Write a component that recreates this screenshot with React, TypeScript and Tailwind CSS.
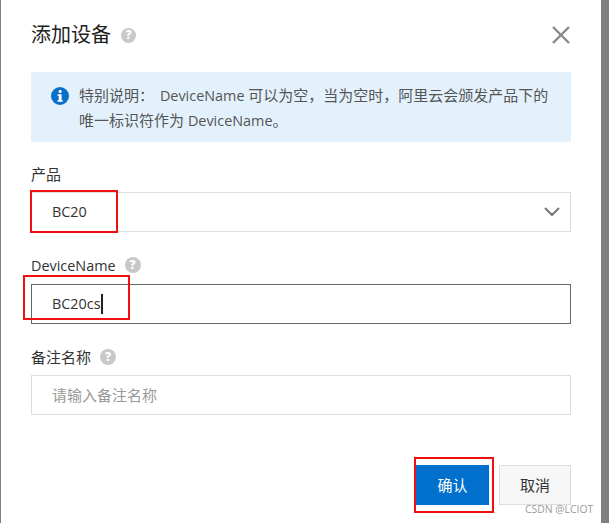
import { ReactNode } from "react";

const font = "font-['Open_Sans','Noto_Sans_CJK_SC',sans-serif]";

function Help({ className = "h-[16px] w-[16px]" }: { className?: string }) {
  return (
    <span className={`flex items-center justify-center rounded-full bg-[#c8c8c8] text-[12px] font-extrabold leading-none text-white ${className}`}>
      ?
    </span>
  );
}

function Field({ label, help, children }: { label: ReactNode; help?: boolean; children: ReactNode }) {
  return (
    <div className="flex flex-col">
      <div className="flex h-[20px] items-center gap-[9px] text-[15px] text-[#333333]">
        <span>{label}</span>
        {help && <Help />}
      </div>
      {children}
    </div>
  );
}

export default function App() {
  return (
    <div className={`relative flex h-[523px] w-[609px] overflow-hidden bg-[#808080] pl-px pr-2 ${font}`}>
      <div className="flex w-[600px] flex-col bg-white px-[30px]">
        {/* Header */}
        <div className="flex h-[72px] items-start justify-between pt-[21px]">
          <div className="flex h-[28px] items-center gap-[10px]">
            <span className="text-[20px] leading-[28px] text-[#222222]">添加设备</span>
            <Help className="h-[15px] w-[15px]" />
          </div>
          <svg className="mt-[4px] h-[20px] w-[20px] text-[#888888]" viewBox="0 0 20 20" fill="none" stroke="currentColor" strokeWidth={2.4}>
            <path d="M2 2l16 16M18 2L2 18" />
          </svg>
        </div>

        {/* Notice */}
        <div className="flex h-[70px] gap-[10px] bg-[#e3f1fc] px-[20px] pt-[11px] text-[15px] leading-[25px] text-[#555555]">
          <svg className="mt-[4px] h-[18px] w-[18px] shrink-0" viewBox="0 0 18 18">
            <circle cx="9" cy="9" r="9" fill="#0a6fc9" />
            <rect x="7.6" y="3" width="3" height="3" rx="1.2" fill="#fff" />
            <path d="M6.5 7.3h4.1v6h1.2v1.4H6.5v-1.4h1.2V8.7H6.5z" fill="#fff" />
          </svg>
          <p className="whitespace-nowrap">
            特别说明： <span className="ml-[2px] text-[14.4px]">DeviceName</span> 可以为空，当为空时，阿里云会颁发产品下的
            <br />
            唯一标识符作为 <span className="text-[14.4px]">DeviceName</span>。
          </p>
        </div>

        <div className="mt-[22px] flex flex-col gap-[23px]">
          <Field label="产品">
            <div className="mt-[8px] flex h-[40px] items-center justify-between border border-[#dddddd] pl-[20px] pr-[9px] text-[14.4px] text-[#333333]">
              <span>BC20</span>
              <svg className="h-[20px] w-[20px] text-[#777777]" viewBox="0 0 20 20" fill="none" stroke="currentColor" strokeWidth={2}>
                <path d="M4 6l7 7 7-7" />
              </svg>
            </div>
          </Field>
          <Field label={<span className="text-[14.4px]">DeviceName</span>} help>
            <div className="mt-[9px] flex h-[40px] items-center border border-[#666666] pl-[20px] text-[14.4px] text-[#333333]">
              <span>BC20cs</span>
              <span className="h-[20px] w-[2px] bg-[#222222]" />
            </div>
          </Field>
          <Field label="备注名称" help>
            <div className="mt-[8px] flex h-[40px] items-center border border-[#dddddd] pl-[20px] text-[15px] text-[#999999]">
              请输入备注名称
            </div>
          </Field>
        </div>

        {/* Footer */}
        <div className="mt-[50px] flex justify-end gap-[10px]">
          <button className="h-[40px] w-[73px] bg-[#0070cc] text-[15px] text-white">确认</button>
          <button className="h-[40px] w-[72px] border border-[#dddddd] bg-[#f7f7f7] text-[15px] text-[#333333]">取消</button>
        </div>
      </div>

      {/* Red annotations drawn over the screenshot */}
      <div className="absolute left-[30px] top-[190px] h-[43px] w-[88px] border-2 border-[#f01010]" />
      <div className="absolute left-[23px] top-[275px] h-[45px] w-[107px] border-2 border-[#f01010]" />
      <div className="absolute left-[414px] top-[457px] h-[56px] w-[80px] border-2 border-[#f01010]" />

      {/* Watermark */}
      <span className="absolute left-[525px] top-[502px] text-[10.4px] leading-[14px] text-[#9a9a9a]">CSDN @LCIOT</span>
    </div>
  );
}
